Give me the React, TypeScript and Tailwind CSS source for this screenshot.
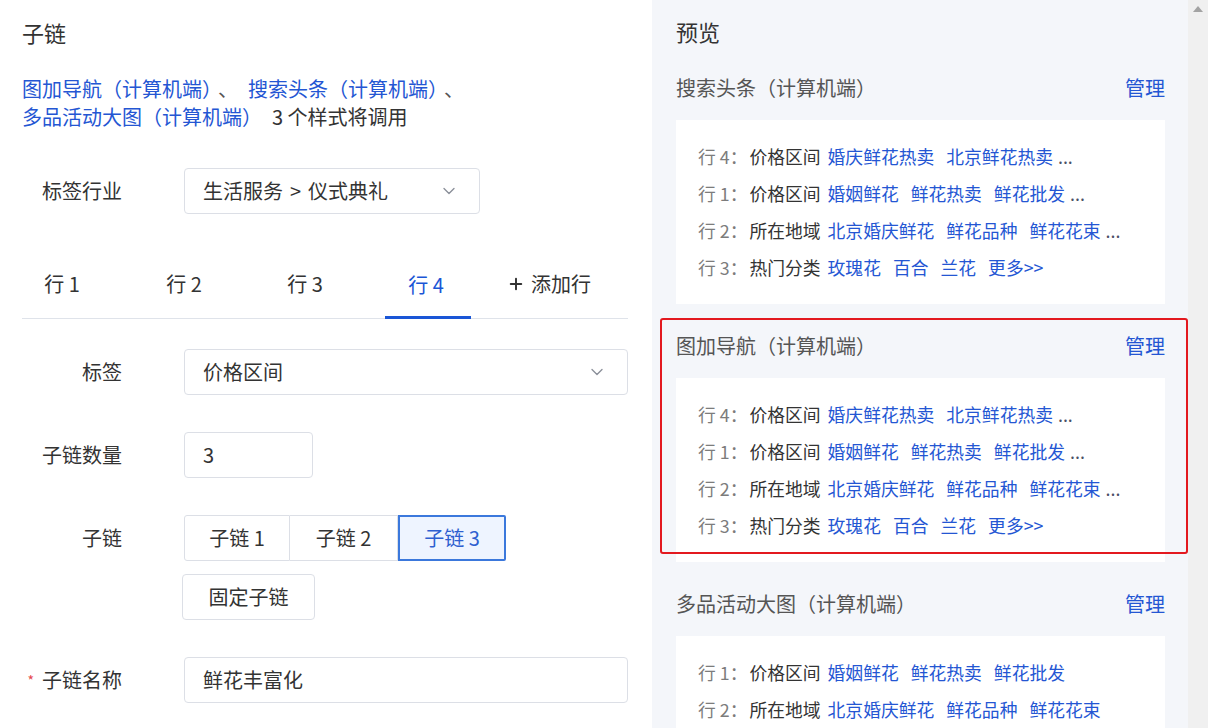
import React from "react";
import { ChevronDown, Plus } from "lucide-react";

type RowData = { n: string; label: string; links: string[]; more?: boolean };

const rowsA: RowData[] = [
  { n: "4", label: "价格区间", links: ["婚庆鲜花热卖", "北京鲜花热卖"], more: true },
  { n: "1", label: "价格区间", links: ["婚姻鲜花", "鲜花热卖", "鲜花批发"], more: true },
  { n: "2", label: "所在地域", links: ["北京婚庆鲜花", "鲜花品种", "鲜花花束"], more: true },
  { n: "3", label: "热门分类", links: ["玫瑰花", "百合", "兰花", "更多>>"] },
];

const rowsB: RowData[] = [
  { n: "1", label: "价格区间", links: ["婚姻鲜花", "鲜花热卖", "鲜花批发"] },
  { n: "2", label: "所在地域", links: ["北京婚庆鲜花", "鲜花品种", "鲜花花束"] },
  { n: "3", label: "热门分类", links: ["玫瑰花", "百合", "兰花", "更多>>"] },
  { n: "4", label: "价格区间", links: ["婚庆鲜花热卖", "北京鲜花热卖"] },
];

function PreviewRow({ r }: { r: RowData }) {
  return (
    <div className="flex h-[37px] items-center whitespace-nowrap text-[17.8px] leading-none">
      <span className="text-[#7c7c7c]">行 {r.n}：</span>
      <span className="ml-[2px] text-[#333333]">{r.label}</span>
      <span className="ml-[7px] flex gap-[12px] text-[#2456d3]">
        {r.links.map((l) => (
          <span key={l}>{l}</span>
        ))}
      </span>
      {r.more && <span className="ml-[5px] text-[#4a4f66]">...</span>}
    </div>
  );
}

function Section({ title, rows }: { title: string; rows: RowData[] }) {
  return (
    <div className="flex flex-col">
      <div className="flex h-[28px] items-center justify-between text-[20px] leading-[28px]">
        <span className="text-[#555555]">{title}</span>
        <span className="text-[#2456d3]">管理</span>
      </div>
      <div className="mt-[18px] bg-white py-[18px] pl-[22px]">
        {rows.map((r, i) => (
          <PreviewRow key={i} r={r} />
        ))}
      </div>
    </div>
  );
}

function FormRow({
  label,
  required,
  children,
  className,
}: {
  label: string;
  required?: boolean;
  children: React.ReactNode;
  className?: string;
}) {
  return (
    <div className={"flex items-start " + (className ?? "")}>
      <div className="flex h-[46px] w-[100px] shrink-0 items-center justify-end text-[20px] text-[#333333]">
        {required && <span className="mr-[8px] text-[14px] text-[#e5484d]">*</span>}
        {label}
      </div>
      <div className="ml-[62px] flex flex-col">{children}</div>
    </div>
  );
}

export default function App() {
  return (
    <div className="flex h-[728px] w-[1208px] overflow-hidden bg-white font-['Noto_Sans_CJK_SC','Noto_Sans',sans-serif] text-[#333333]">
      {/* Left panel */}
      <div className="flex w-[652px] shrink-0 flex-col pl-[22px] pr-[24px] pt-[17px]">
        <div className="text-[22px] leading-[30px] text-[#333333]">子链</div>
        <p className="mt-[28px] text-[20px] leading-[28px]">
          <span className="text-[#2456d3]">图加导航（计算机端）</span>
          <span className="ml-[6px] mr-[10px] text-[#555555]">、</span>
          <span className="text-[#2456d3]">搜索头条（计算机端）</span>
          <span className="ml-[6px] text-[#555555]">、</span>
          <br />
          <span className="text-[#2456d3]">多品活动大图（计算机端）</span>
          <span className="ml-[10px] text-[#333333]">3 个样式将调用</span>
        </p>

        <FormRow label="标签行业" className="mt-[37px]">
          <div className="flex h-[46px] w-[296px] items-center justify-between rounded-[4px] border border-[#dcdfe6] pl-[18px] pr-[20px] text-[20px] text-[#333333]">
            <span>
              生活服务<span className="mx-[7px]">&gt;</span>仪式典礼
            </span>
            <ChevronDown size={20} strokeWidth={1.6} className="text-[#8a8f99]" />
          </div>
        </FormRow>

        {/* Tabs */}
        <div className="mt-[36px] flex h-[69px] gap-[35px] border-b border-[#dfe3ea] text-[20px]">
          {["行 1", "行 2", "行 3", "行 4"].map((t, i) => (
            <div
              key={t}
              className={
                i === 3
                  ? "relative mb-[-1px] flex w-[86px] items-center justify-center border-b-[3px] border-[#1a56d6] pt-[3px] text-[#1a56d6]"
                  : "flex w-[86px] items-center justify-center text-[#333333]"
              }
            >
              {i === 0 ? <span className="ml-[-6px]">{t}</span> : i === 3 ? <span className="ml-[-4px]">{t}</span> : <span className="ml-[-4px]">{t}</span>}
            </div>
          ))}
          <div className="flex w-[86px] items-center justify-center whitespace-nowrap text-[#333333]">
            <Plus size={18} strokeWidth={2.6} className="mr-[6px] shrink-0" />
            添加行
          </div>
        </div>

        <FormRow label="标签" className="mt-[30px]">
          <div className="flex h-[46px] w-[444px] items-center justify-between rounded-[4px] border border-[#dcdfe6] pl-[18px] pr-[20px] text-[20px] text-[#333333]">
            <span>价格区间</span>
            <ChevronDown size={20} strokeWidth={1.6} className="text-[#8a8f99]" />
          </div>
        </FormRow>

        <FormRow label="子链数量" className="mt-[37px]">
          <div className="flex h-[46px] w-[129px] items-center rounded-[4px] border border-[#dcdfe6] pl-[18px] text-[20px] text-[#333333]">
            3
          </div>
        </FormRow>

        <FormRow label="子链" className="mt-[37px]">
          <div className="flex h-[46px] text-[20px]">
            <div className="flex w-[106px] items-center justify-center rounded-l-[3px] border border-[#dcdfe6] text-[#333333]">
              子链 1
            </div>
            <div className="flex w-[108px] items-center justify-center border-y border-r border-[#dcdfe6] text-[#333333]">
              子链 2
            </div>
            <div className="flex w-[108px] items-center justify-center rounded-r-[2px] border-2 border-[#3b78dc] bg-[#eef4ff] text-[#2e5fd0]">
              子链 3
            </div>
          </div>
          <div className="ml-[-2px] mt-[13px] flex h-[46px] w-[133px] items-center justify-center rounded-[4px] border border-[#dcdfe6] text-[20px] text-[#333333]">
            固定子链
          </div>
        </FormRow>

        <FormRow label="子链名称" required className="mt-[37px]">
          <div className="flex h-[46px] w-[444px] items-center rounded-[4px] border border-[#dcdfe6] pl-[18px] text-[20px] text-[#333333]">
            鲜花丰富化
          </div>
        </FormRow>
      </div>

      {/* Right preview panel */}
      <div className="relative flex w-[536px] shrink-0 flex-col overflow-hidden bg-[#f4f6fa] pl-[24px] pr-[23px] pt-[16px]">
        <div className="text-[22px] leading-[30px] text-[#333333]">预览</div>
        <div className="mt-[28px] flex flex-col gap-[28px]">
          <Section title="搜索头条（计算机端）" rows={rowsA} />
          <Section title="图加导航（计算机端）" rows={rowsA} />
          <Section title="多品活动大图（计算机端）" rows={rowsB} />
        </div>
        <div className="pointer-events-none absolute left-[8px] top-[318px] h-[236px] w-[528px] rounded-[3px] border-2 border-[#e3191f]" />
      </div>

      {/* Scrollbar */}
      <div className="flex w-[20px] shrink-0 justify-center bg-[#f0f0f0] pt-[6px]">
        <div className="h-0 w-0 border-x-[5px] border-b-[6px] border-x-transparent border-b-[#a3a3a3]" />
      </div>
    </div>
  );
}
